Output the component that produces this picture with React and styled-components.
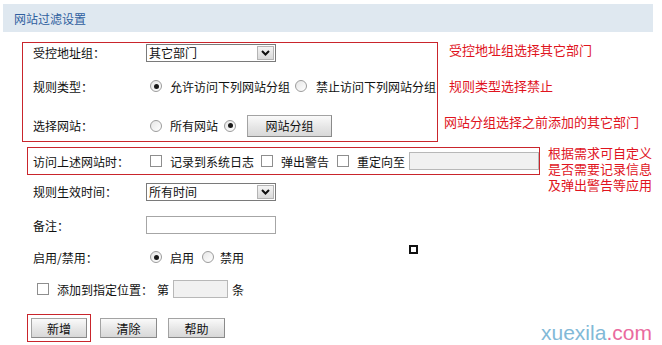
import React from 'react';
import styled, { createGlobalStyle } from 'styled-components';

const GlobalStyle = createGlobalStyle`
	html, body {
		margin: 0;
		padding: 0;
		background: #fff;
	}
	body {
		font-family: "Noto Sans CJK SC", "Noto Sans", sans-serif;
		font-size: 12px;
		color: #111;
	}
`;

const Page = styled.div`
	position: relative;
	width: 662px;
	height: 345px;
	overflow: hidden;
`;

const Header = styled.div`
	display: flex;
	align-items: center;
	height: 28px;
	margin: 4px 9px 0 3px;
	padding-left: 11px;
	background: #dfe8f0;
	color: #2f5f9f;
	font-size: 12px;
`;

const Form = styled.div`
	margin-top: 10px;
	padding-left: 22px;
`;

const Section = styled.div`
	display: flex;
	align-items: flex-start;
	margin-left: ${(p) => p.$indent || 0}px;
	margin-top: ${(p) => p.$top || 0}px;
`;

const RedBox = styled.div`
	box-sizing: border-box;
	flex-shrink: 0;
	width: ${(p) => p.$w}px;
	border: 1px solid #c9252c;
	padding-left: ${(p) => p.$pad}px;
`;

// notes hang beside the box and must not stretch the section
const Notes = styled.div`
	display: flex;
	flex-direction: column;
	height: 0;
	overflow: visible;
	margin-left: ${(p) => p.$gap}px;
	margin-top: ${(p) => p.$top || 0}px;
	color: #e0141e;
	font-size: 13px;
	line-height: ${(p) => p.$lh || 16}px;
`;

const Note = styled.div`
	flex-shrink: 0;
	margin-top: ${(p) => p.$top || 0}px;
	margin-left: ${(p) => p.$shift || 0}px;
	white-space: nowrap;
`;

const Row = styled.div`
	display: flex;
	align-items: center;
	height: ${(p) => p.$h}px;
	padding-left: ${(p) => p.$pad || 0}px;
	white-space: nowrap;
`;

const Label = styled.span`
	flex-shrink: 0;
	width: 113px;
`;

const Select = styled.div`
	box-sizing: border-box;
	display: flex;
	align-items: center;
	justify-content: space-between;
	width: 130px;
	height: 18px;
	border: 1px solid #7a7a7a;
	background: #fff;
	padding-left: 2px;
	line-height: 16px;
`;

const Arrow = styled.span`
	box-sizing: border-box;
	display: flex;
	align-items: center;
	justify-content: center;
	width: 17px;
	height: 14px;
	margin-right: 1px;
	border: 1px solid #b4b4b4;
	background: linear-gradient(#f4f4f4, #dadada);
`;

const Input = styled.span`
	box-sizing: border-box;
	display: inline-block;
	width: ${(p) => p.$w}px;
	height: ${(p) => p.$h || 18}px;
	border: 1px solid ${(p) => (p.$disabled ? '#b8b8b8' : '#a6a6a6')};
	background: ${(p) => (p.$disabled ? '#f1f1f1' : '#fff')};
	margin-left: ${(p) => p.$ml || 0}px;
	margin-right: ${(p) => p.$mr || 0}px;
`;

const Radio = styled.span`
	box-sizing: border-box;
	position: relative;
	flex-shrink: 0;
	width: 12px;
	height: 12px;
	border-radius: 50%;
	border: 1px solid #9c9c9c;
	background: linear-gradient(135deg, #e6e6e6, #fff);
	margin-left: ${(p) => p.$ml || 0}px;
	margin-right: ${(p) => p.$mr || 8}px;
	&::after {
		content: '';
		display: ${(p) => (p.$checked ? 'block' : 'none')};
		position: absolute;
		left: 2.5px;
		top: 2.5px;
		width: 5px;
		height: 5px;
		border-radius: 50%;
		background: #1a1a1a;
	}
`;

const Check = styled.span`
	box-sizing: border-box;
	flex-shrink: 0;
	width: 12px;
	height: 12px;
	border: 1px solid #8e8e8e;
	background: #fff;
	margin-left: ${(p) => p.$ml || 0}px;
	margin-right: ${(p) => p.$mr || 8}px;
`;

const Text = styled.span`
	margin-right: ${(p) => p.$mr || 0}px;
`;

const Button = styled.span`
	box-sizing: border-box;
	display: inline-flex;
	align-items: center;
	justify-content: center;
	width: ${(p) => p.$w || 57}px;
	height: ${(p) => p.$h || 20}px;
	margin-left: ${(p) => p.$ml || 0}px;
	border: 1px solid #a3a3a3;
	border-right-color: #8a8a8a;
	border-bottom-color: #8a8a8a;
	background: linear-gradient(#fafafa, #e4e4e4 60%, #d8d8d8);
	color: #111;
	font-size: 12px;
`;

const ButtonBar = styled.div`
	display: flex;
	align-items: center;
	margin-top: 8px;
	padding-left: 5px;
`;

const FocusFrame = styled.span`
	display: inline-flex;
	padding: 3px;
	border: 1px solid #c9252c;
`;

const Watermark = styled.div`
	position: absolute;
	left: 541px;
	top: 322px;
	font-family: "Liberation Sans", Arial, sans-serif;
	font-size: 21px;
	line-height: 21px;
	color: #82b9d7;
	span {
		color: #ea6a9e;
	}
`;

const Marker = styled.div`
	position: absolute;
	left: 409px;
	top: 245px;
	width: 9px;
	height: 9px;
	box-sizing: border-box;
	border: 2px solid #111;
`;

function Chevron() {
	return (
		<svg width="9" height="6" viewBox="0 0 9 6">
			<path d="M1 1 L4.5 4.5 L8 1" fill="none" stroke="#111" strokeWidth="2" />
		</svg>
	);
}

export default function App() {
	return (
		<Page>
			<GlobalStyle />
			<Header>网站过滤设置</Header>
			<Form>
				<Section>
					<RedBox $w={416} $pad={10}>
						<Row $h={19}>
							<Label>受控地址组：</Label>
							<Select>
								其它部门
								<Arrow>
									<Chevron />
								</Arrow>
							</Select>
						</Row>
						<Row $h={48}>
							<Label>规则类型：</Label>
							<Radio $ml={4} $checked />
							<Text $mr={5}>允许访问下列网站分组</Text>
							<Radio $mr={9} />
							<Text>禁止访问下列网站分组</Text>
						</Row>
						<Row $h={31}>
							<Label>选择网站：</Label>
							<Radio $ml={4} />
							<Text $mr={6}>所有网站</Text>
							<Radio $checked $mr={11} />
							<Button $w={85} $h={22}>网站分组</Button>
						</Row>
					</RedBox>
					<Notes $gap={11}>
						<Note>受控地址组选择其它部门</Note>
						<Note $top={20}>规则类型选择禁止</Note>
						<Note $top={20} $shift={-5}>网站分组选择之前添加的其它部门</Note>
					</Notes>
				</Section>
				<Section $indent={5} $top={5}>
					<RedBox $w={513} $pad={5}>
						<Row $h={26}>
							<Label>访问上述网站时：</Label>
							<Check $ml={4} />
							<Text $mr={7}>记录到系统日志</Text>
							<Check />
							<Text $mr={8}>弹出警告</Text>
							<Check />
							<Text>重定向至</Text>
							<Input $w={130} $ml={4} $disabled />
						</Row>
					</RedBox>
					<Notes $gap={8} $top={-2} $lh={16}>
						<Note>根据需求可自定义</Note>
						<Note>是否需要记录信息</Note>
						<Note>及弹出警告等应用</Note>
					</Notes>
				</Section>
				<Row $h={33} $pad={11}>
					<Label>规则生效时间：</Label>
					<Select>
						所有时间
						<Arrow>
							<Chevron />
						</Arrow>
					</Select>
				</Row>
				<Row $h={34} $pad={11}>
					<Label>备注：</Label>
					<Input $w={130} />
				</Row>
				<Row $h={30} $pad={11}>
					<Label>启用/禁用：</Label>
					<Radio $ml={4} $checked />
					<Text $mr={8}>启用</Text>
					<Radio $mr={6} />
					<Text>禁用</Text>
				</Row>
				<Row $h={34} $pad={15}>
					<Check $mr={8} />
					<Text $mr={4}>添加到指定位置：</Text>
					<Text>第</Text>
					<Input $w={55} $ml={4} $mr={4} $disabled />
					<Text>条</Text>
				</Row>
				<ButtonBar>
					<FocusFrame>
						<Button $w={56}>新增</Button>
					</FocusFrame>
					<Button $ml={9}>清除</Button>
					<Button $ml={11}>帮助</Button>
				</ButtonBar>
			</Form>
			<Marker />
			<Watermark>
				xuexila<span>.com</span>
			</Watermark>
		</Page>
	);
}
